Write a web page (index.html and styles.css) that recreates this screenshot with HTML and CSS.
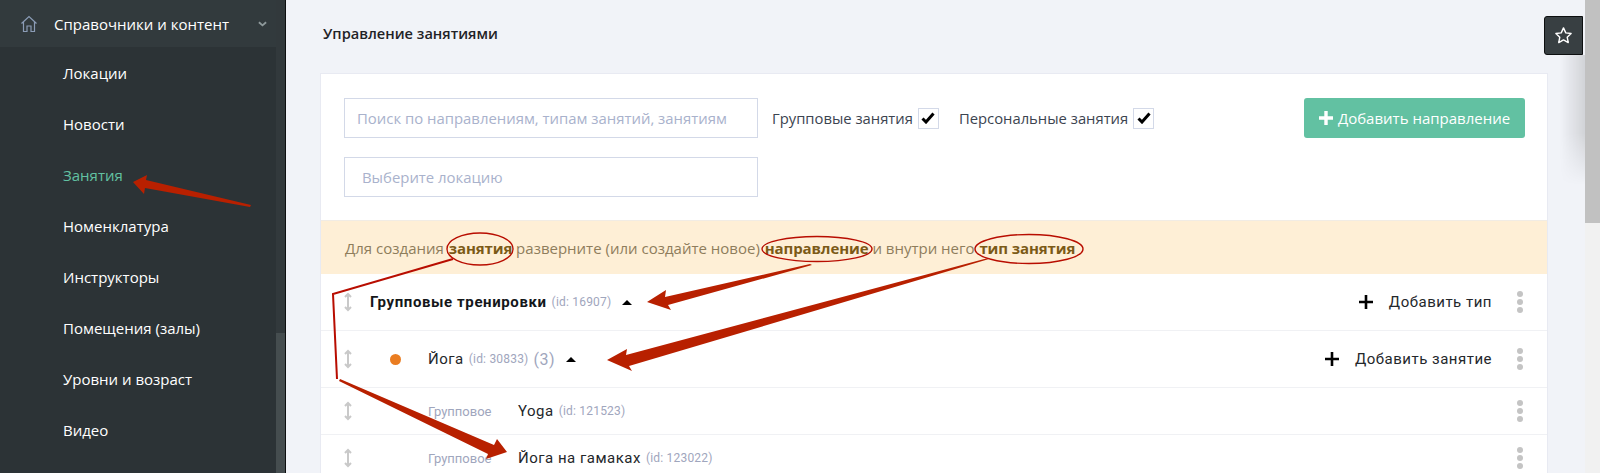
FILE: index.html
```html
<!DOCTYPE html>
<html lang="ru">
<head>
<meta charset="utf-8">
<title>Управление занятиями</title>
<link rel="stylesheet" href="styles.css">
</head>
<body>
<div class="app">
  <aside class="sidebar">
    <nav class="nav">
      <div class="nav-head">
        <svg class="home" viewBox="0 0 18 18" width="18" height="18"><path d="M1.5 8.5 9 1.5l7.5 7M3.5 7v9.5h3.5v-5.5h4v5.5h3.5V7" fill="none" stroke="#8b9cb6" stroke-width="1.2"/></svg>
        <span class="nav-title">Справочники и контент</span>
        <svg class="chev" viewBox="0 0 10 6" width="9" height="6"><path d="M1 1l4 3.5L9 1" fill="none" stroke="#8f9a9c" stroke-width="2"/></svg>
      </div>
      <a class="nav-item">Локации</a>
      <a class="nav-item">Новости</a>
      <a class="nav-item active">Занятия</a>
      <a class="nav-item">Номенклатура</a>
      <a class="nav-item">Инструкторы</a>
      <a class="nav-item">Помещения (залы)</a>
      <a class="nav-item">Уровни и возраст</a>
      <a class="nav-item">Видео</a>
    </nav>
    <div class="side-scroll"><div class="side-thumb"></div></div>
  </aside>
  <main class="main">
    <h1 class="title">Управление занятиями</h1>
    <section class="card">
      <div class="filters">
        <div class="filter-left">
          <div class="filter-row">
            <div class="field">Поиск по направлениям, типам занятий, занятиям</div>
            <label class="check">Групповые занятия <span class="box"><svg viewBox="0 0 14 12" width="14" height="12"><path d="M1.5 6.5 5 10l7.5-8.5" fill="none" stroke="#000" stroke-width="3"/></svg></span></label>
            <label class="check">Персональные занятия <span class="box"><svg viewBox="0 0 14 12" width="14" height="12"><path d="M1.5 6.5 5 10l7.5-8.5" fill="none" stroke="#000" stroke-width="3"/></svg></span></label>
          </div>
          <div class="field field-loc">Выберите локацию</div>
        </div>
        <button class="add-btn"><svg viewBox="0 0 14 14" width="14" height="14"><path d="M7 0v14M0 7h14" stroke="#fff" stroke-width="3.4"/></svg>Добавить направление</button>
      </div>
      <div class="banner">Для создания <b>занятия</b> разверните (или создайте новое) <b>направление</b> и внутри него <b>тип занятия</b></div>
      <div class="row row-tall">
        <svg class="drag" viewBox="0 0 10 20" width="10" height="20"><path d="M5 2v16M2 5l3-3 3 3M2 15l3 3 3-3" fill="none" stroke="#c9c9c9" stroke-width="2"/></svg>
        <span class="name strong">Групповые тренировки</span><span class="id">(id: 16907)</span><span class="caret"></span>
        <span class="spacer"></span>
        <svg class="plus" viewBox="0 0 14 14" width="14" height="14"><path d="M7 0v14M0 7h14" stroke="#000" stroke-width="2.6"/></svg>
        <span class="add">Добавить тип</span>
        <span class="dots"><i></i><i></i><i></i></span>
      </div>
      <div class="row row-tall">
        <svg class="drag" viewBox="0 0 10 20" width="10" height="20"><path d="M5 2v16M2 5l3-3 3 3M2 15l3 3 3-3" fill="none" stroke="#c9c9c9" stroke-width="2"/></svg>
        <span class="dot"></span>
        <span class="name">Йога</span><span class="id">(id: 30833)</span><span class="count">(3)</span><span class="caret"></span>
        <span class="spacer"></span>
        <svg class="plus" viewBox="0 0 14 14" width="14" height="14"><path d="M7 0v14M0 7h14" stroke="#000" stroke-width="2.6"/></svg>
        <span class="add">Добавить занятие</span>
        <span class="dots"><i></i><i></i><i></i></span>
      </div>
      <div class="row">
        <svg class="drag" viewBox="0 0 10 20" width="10" height="20"><path d="M5 2v16M2 5l3-3 3 3M2 15l3 3 3-3" fill="none" stroke="#c9c9c9" stroke-width="2"/></svg>
        <span class="kind">Групповое</span>
        <span class="name">Yoga</span><span class="id">(id: 121523)</span>
        <span class="spacer"></span>
        <span class="dots"><i></i><i></i><i></i></span>
      </div>
      <div class="row">
        <svg class="drag" viewBox="0 0 10 20" width="10" height="20"><path d="M5 2v16M2 5l3-3 3 3M2 15l3 3 3-3" fill="none" stroke="#c9c9c9" stroke-width="2"/></svg>
        <span class="kind">Групповое</span>
        <span class="name">Йога на гамаках</span><span class="id">(id: 123022)</span>
        <span class="spacer"></span>
        <span class="dots"><i></i><i></i><i></i></span>
      </div>
    </section>
  </main>
  <div class="shade"></div>
  <div class="star-tab"><svg viewBox="0 0 20 20" width="19" height="19"><path d="M10 2l2.4 5.2 5.6.7-4.1 3.9 1.1 5.6-5-2.8-5 2.8 1.1-5.6L2 7.9l5.6-.7z" fill="none" stroke="#fff" stroke-width="1.5" stroke-linejoin="round"/></svg></div>
  <div class="page-scroll"><div class="page-thumb"></div></div>
  <svg class="notes" viewBox="0 0 1600 473" width="1600" height="473">
    <g fill="#b82000">
      <path d="M133 182 147 175 146 180 251 205 250 207 145 188 144 194Z"/>
      <path d="M647 302 666 290 665 297 810 264 812 265 668 305 671 310Z"/>
      <path d="M607 360 627 349 626 355 988 258 989 259 629 366 632 371Z"/>
      <path d="M507 452 497 439 494 445 340 379 339 381 488 454 486 459Z"/>
    </g>
    <g fill="none" stroke="#b80d00" stroke-width="1.4">
      <ellipse cx="480" cy="249" rx="33" ry="16"/>
      <ellipse cx="817" cy="249" rx="55" ry="12.5"/>
      <ellipse cx="1029" cy="249" rx="54" ry="14.5"/>
      <path stroke-width="2" d="M453 259 333 294 337 379"/>
    </g>
  </svg>
</div>
</body>
</html>
```

FILE: styles.css
```css
* { box-sizing: border-box; }
html, body { margin: 0; height: 100%; overflow: hidden; }
body { font-family: "Open Sans", "Liberation Sans", sans-serif; font-size: 15px; color: #24272b; background: #f1f3f8; }
.app { position: relative; display: flex; width: 1600px; height: 473px; overflow: hidden; }

.sidebar { display: flex; flex: none; width: 286px; background: #2c3336; border-right: 1px solid #0d0f10; }
.nav { flex: none; width: 276px; }
.nav-head { display: flex; align-items: center; height: 47px; padding-left: 20px; background: #323a3d; color: #fff; }
.home { flex: none; }
.nav-title { margin-left: 16px; flex: 1; }
.chev { flex: none; margin-right: 9px; }
.nav-item { display: flex; align-items: center; height: 51px; padding-left: 63px; color: #fff; }
.nav-item.active { color: #62c1a2; }
.side-scroll { flex: 1; background: #454d4f; }
.side-thumb { height: 333px; background: #32393c; }

.main { flex: none; width: 1299px; padding: 0 37px 0 34px; }
.title { margin: 0; padding: 23px 0 0 3px; height: 73px; font-size: 14.6px; font-weight: 600; color: #1f2226; }
.card { width: 1228px; background: #fff; border: 1px solid #e8eaf2; border-bottom: 0; }
.filters { display: flex; justify-content: space-between; height: 147px; padding: 24px 22px 0 23px; border-bottom: 1px solid #f1ece4; }
.filter-left { display: flex; flex-direction: column; gap: 19px; }
.filter-row { display: flex; align-items: center; }
.field { display: flex; align-items: center; width: 414px; height: 40px; padding-left: 12px; border: 1px solid #d3d9e8; font-size: 14.9px; color: #a9b2cc; }
.field-loc { padding-left: 17px; }
.check { display: flex; align-items: center; gap: 5px; margin-left: 14px; font-size: 14.8px; color: #3c4450; }
.check + .check { margin-left: 20px; }
.box { display: flex; align-items: center; justify-content: center; width: 21px; height: 21px; border: 1px solid #d3d9e8; background: #fff; }
.add-btn { display: flex; align-items: center; gap: 5px; justify-content: center; width: 221px; height: 40px; padding: 0; border: 0; border-radius: 3px; background: #62c1a2; color: #fff; font: 15px "Open Sans", sans-serif; }

.banner { height: 53px; padding-left: 24px; line-height: 54px; background: #feefd6; color: #8e7d5c; }
.banner b { color: #7b5a17; font-weight: 700; letter-spacing: -.1px; margin-left: 1px; }

.row { display: flex; align-items: center; height: 47px; padding-left: 22px; padding-right: 49px; border-bottom: 1px solid #f0f1f4; font-family: Roboto, sans-serif; font-size: 15px; }
.row-tall { height: 57px; }
.drag { flex: none; margin-right: 17px; }
.name { color: #24272b; letter-spacing: .5px; }
.name.strong { font-weight: 700; color: #14171a; letter-spacing: .6px; }
.id { margin-left: 5px; font-size: 12px; letter-spacing: .2px; color: #9fa6bd; }
.count { margin-left: 5px; font-size: 16px; letter-spacing: .5px; color: #9fa6bd; }
.caret { width: 0; height: 0; margin-left: 11px; border-left: 5px solid transparent; border-right: 5px solid transparent; border-bottom: 5px solid #000; }
.dot { flex: none; width: 11px; height: 11px; margin: 0 27px 0 20px; border-radius: 50%; background: #ea7d21; }
.kind { flex: none; width: 90px; margin-left: 58px; font-size: 13px; color: #9fa6bd; }
.spacer { flex: 1; }
.plus { flex: none; margin-right: 16px; }
.add { color: #24272b; letter-spacing: .5px; }
.dots { position: relative; left: 25px; display: flex; flex-direction: column; gap: 2px; width: 6px; }
.dots i { display: block; width: 6px; height: 6px; border-radius: 50%; background: #c4c4c4; }

.shade { position: absolute; top: 55px; left: 1560px; width: 25px; height: 130px; background: linear-gradient(to right, rgba(0,0,0,0), rgba(0,0,0,.13)); -webkit-mask-image: linear-gradient(to bottom, #000 60%, transparent); mask-image: linear-gradient(to bottom, #000 60%, transparent); }
.star-tab { position: absolute; top: 16px; left: 1544px; display: flex; align-items: center; justify-content: center; width: 39px; height: 39px; background: #383f42; border: 1px solid #0d0f10; border-radius: 3px 0 0 3px; }
.page-scroll { position: absolute; top: 0; right: 0; width: 15px; height: 473px; background: #f1f1f1; }
.page-thumb { height: 223px; background: #c1c1c1; }
.notes { position: absolute; top: 0; left: 0; pointer-events: none; }
```
